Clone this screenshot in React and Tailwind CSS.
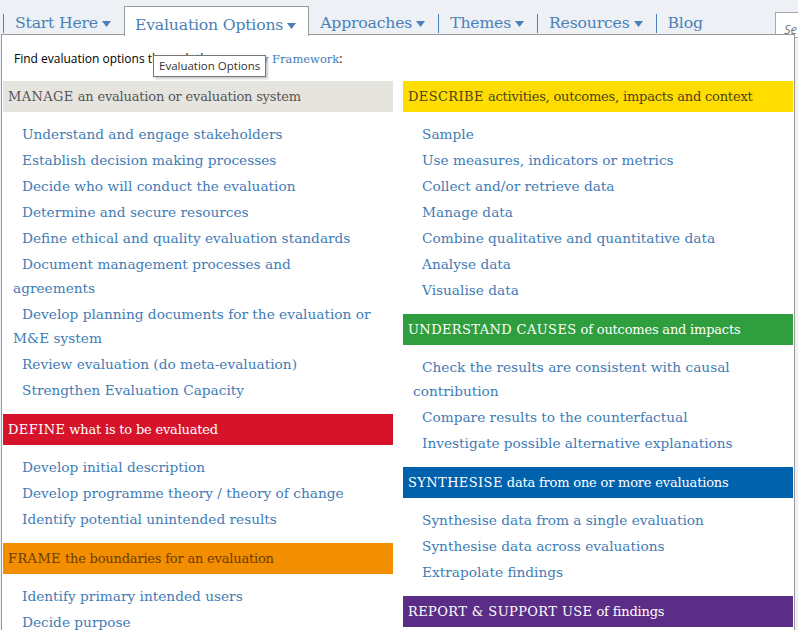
const slab = { fontFamily: '"DejaVu Serif", "Liberation Serif", serif' };

const navItems = [
  { label: "Start Here", caret: true },
  { label: "Evaluation Options", caret: true, active: true },
  { label: "Approaches", caret: true },
  { label: "Themes", caret: true },
  { label: "Resources", caret: true },
  { label: "Blog" },
];

const left = [
  {
    key: "MANAGE",
    rest: "an evaluation or evaluation system",
    cls: "bg-[#e6e4df] text-[#555]",
    items: [
      "Understand and engage stakeholders",
      "Establish decision making processes",
      "Decide who will conduct the evaluation",
      "Determine and secure resources",
      "Define ethical and quality evaluation standards",
      "Document management processes and agreements",
      "Develop planning documents for the evaluation or M&E system",
      "Review evaluation (do meta-evaluation)",
      "Strengthen Evaluation Capacity",
    ],
  },
  {
    key: "DEFINE",
    rest: "what is to be evaluated",
    cls: "bg-[#d6132a] text-white",
    items: [
      "Develop initial description",
      "Develop programme theory / theory of change",
      "Identify potential unintended results",
    ],
  },
  {
    key: "FRAME",
    rest: "the boundaries for an evaluation",
    cls: "bg-[#f28e00] text-[#6b3d00]",
    items: ["Identify primary intended users", "Decide purpose"],
  },
];

const right = [
  {
    key: "DESCRIBE",
    rest: "activities, outcomes, impacts and context",
    cls: "bg-[#ffdd00] text-[#4d4419]",
    items: [
      "Sample",
      "Use measures, indicators or metrics",
      "Collect and/or retrieve data",
      "Manage data",
      "Combine qualitative and quantitative data",
      "Analyse data",
      "Visualise data",
    ],
  },
  {
    key: "UNDERSTAND CAUSES",
    rest: "of outcomes and impacts",
    cls: "bg-[#2f9e3f] text-white",
    items: [
      "Check the results are consistent with causal contribution",
      "Compare results to the counterfactual",
      "Investigate possible alternative explanations",
    ],
  },
  {
    key: "SYNTHESISE",
    rest: "data from one or more evaluations",
    cls: "bg-[#0062ad] text-white",
    items: [
      "Synthesise data from a single evaluation",
      "Synthesise data across evaluations",
      "Extrapolate findings",
    ],
  },
  {
    key: "REPORT & SUPPORT USE",
    rest: "of findings",
    cls: "bg-[#5c2d87] text-white",
    items: [],
  },
];

function Caret() {
  return (
    <svg width="9" height="6" viewBox="0 0 9 6" className="ml-[4px] mt-[2px]">
      <path d="M0 0h9L4.5 6z" fill="#4a80b6" />
    </svg>
  );
}

function Section({ s }) {
  return (
    <div>
      <div
        className={`h-[31px] flex items-center pl-[5px] text-[13px] whitespace-nowrap ${s.cls}`}
        style={slab}
      >
        <span className="tracking-[0.4px]">{s.key}</span>
        <span className="ml-[4px] tracking-[-0.2px]">{s.rest}</span>
      </div>
      {s.items.length > 0 && (
        <ul className="mt-[10px] mb-[12px] pl-[10px] pr-[22px]">
          {s.items.map((it) => (
            <li
              key={it}
              className="text-[13.7px] leading-[24px] mb-[2px] indent-[9px] text-[#3f7cb6]"
              style={slab}
            >
              {it}
            </li>
          ))}
        </ul>
      )}
    </div>
  );
}

export default function App() {
  return (
    <div className="w-[798px] h-[630px] overflow-hidden bg-[#edf1f6] relative">
      {/* nav */}
      <div className="flex items-end h-[35px] pl-[3px]">
        {navItems.map((n, i) => {
          const prevActive = i > 0 && navItems[i - 1].active;
          const sep = !n.active && !prevActive && i !== 1;
          return (
            <div key={n.label} className="flex items-end">
              {sep && <div className="w-[1px] h-[19px] bg-[#4a80b6] mb-[2px]" />}
              <div
                className={
                  n.active
                    ? "relative z-20 flex items-center h-[30px] pl-[10px] pr-[12px] pt-[6px] bg-white border border-b-0 border-[#9a9a9a] mb-[-1px]"
                    : "flex items-center h-[30px] pl-[11px] pr-[13px] pt-[6px]"
                }
              >
                <span className="text-[15.7px] text-[#4a80b6] tracking-[-0.2px]" style={slab}>
                  {n.label}
                </span>
                {n.caret && <Caret />}
              </div>
            </div>
          );
        })}
        <div className="ml-auto mr-[-20px] self-start mt-[12px] w-[43px] h-[26px] bg-white border border-[#a8a8a8] pl-[8px] pt-[3px] overflow-hidden">
          <span className="text-[13px] italic text-[#777]" style={{ fontFamily: '"Open Sans", sans-serif' }}>
            Se
          </span>
        </div>
      </div>

      {/* dropdown panel */}
      <div className="absolute z-10 left-[1px] top-[34px] w-[794px] h-[600px] bg-white border border-[#9a9a9a] px-[1px]">
        <div className="h-[46px] pl-[11px] pt-[15px] text-[12px] text-black" style={{ fontFamily: '"Open Sans", sans-serif' }}>
          Find evaluation options through the{" "}
          <span className="text-[#3f7cb6] text-[11.5px]" style={slab}>
            Rainbow Framework
          </span>
          :
        </div>
        <div className="grid grid-cols-2 gap-[10px]">
          <div>
            {left.map((s) => (
              <Section key={s.key} s={s} />
            ))}
          </div>
          <div>
            {right.map((s) => (
              <Section key={s.key} s={s} />
            ))}
          </div>
        </div>
      </div>

      {/* tooltip */}
      <div
        className="absolute z-30 left-[153px] top-[55px] h-[22px] px-[5px] flex items-center bg-white border border-[#767676] text-[11.5px] text-[#333] shadow-[2px_2px_2px_rgba(0,0,0,0.2)]"
        style={{ fontFamily: '"Open Sans", sans-serif' }}
      >
        Evaluation Options
      </div>
    </div>
  );
}
